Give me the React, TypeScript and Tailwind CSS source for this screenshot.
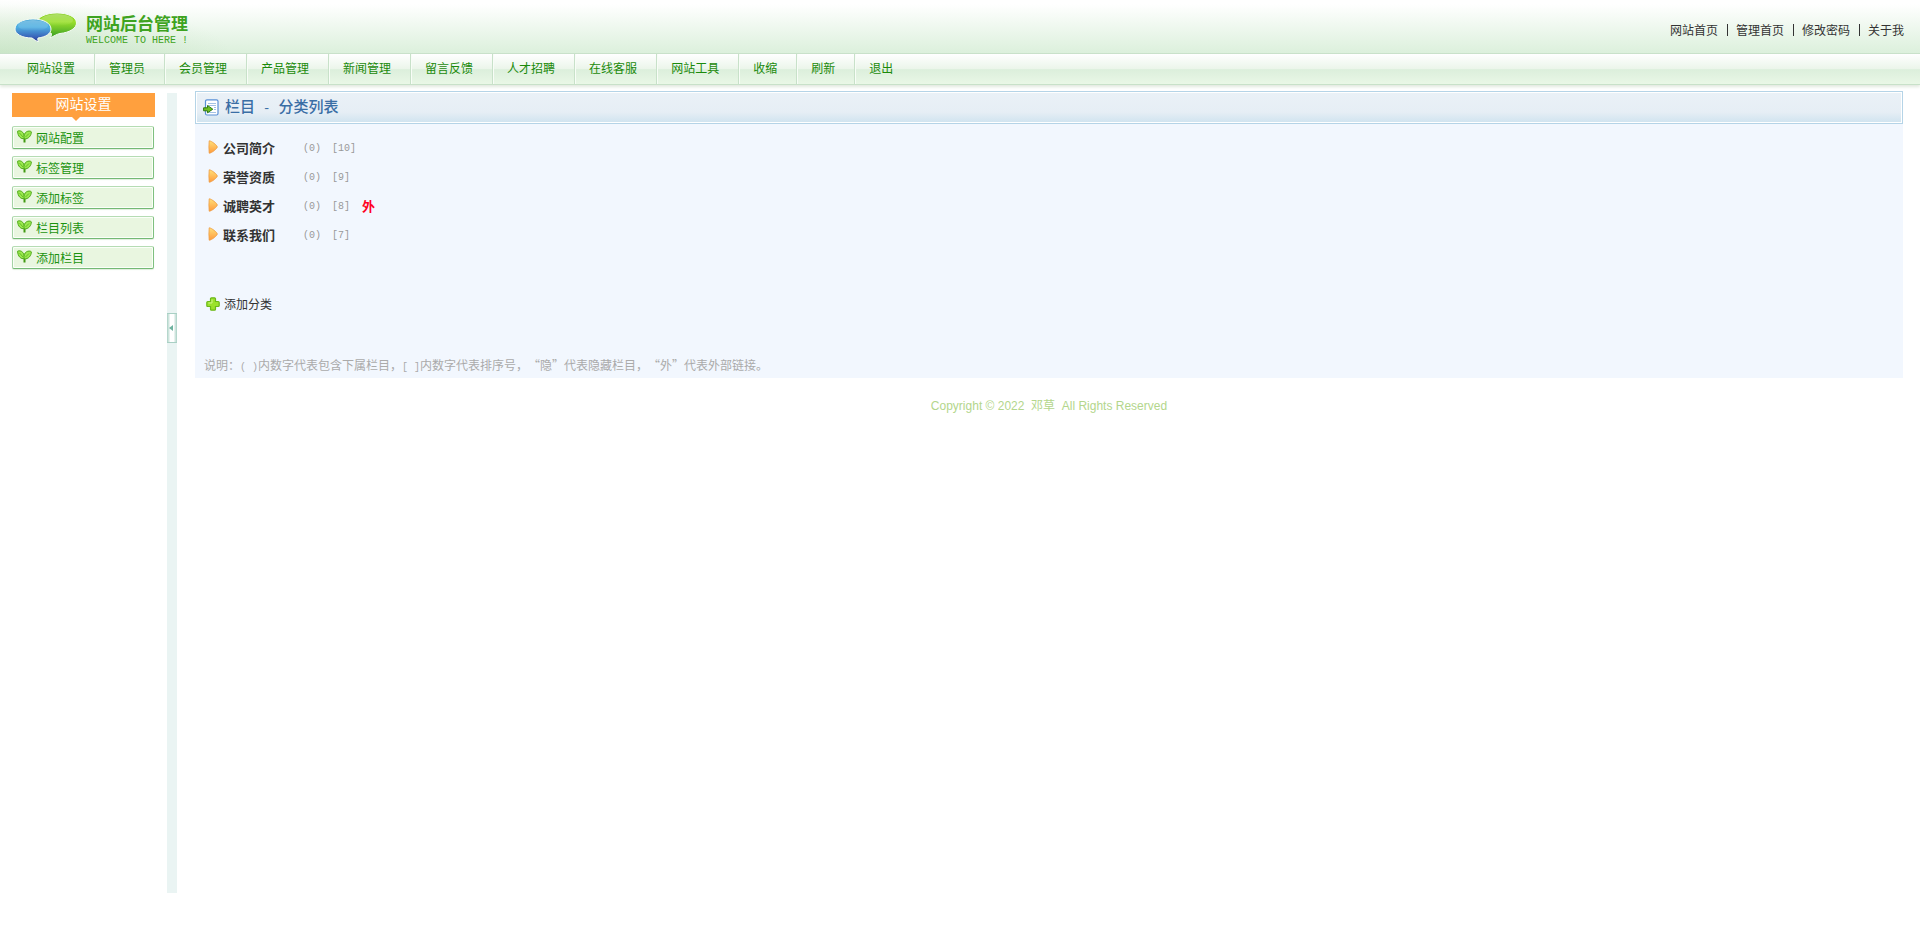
import React from "react";

interface Category {
  name: string;
  children: number;
  sort: number;
  external?: boolean;
}

const TOP_LINKS = ["网站首页", "管理首页", "修改密码", "关于我"];

const NAV_ITEMS = [
  "网站设置",
  "管理员",
  "会员管理",
  "产品管理",
  "新闻管理",
  "留言反馈",
  "人才招聘",
  "在线客服",
  "网站工具",
  "收缩",
  "刷新",
  "退出",
];

const SIDE_ITEMS = ["网站配置", "标签管理", "添加标签", "栏目列表", "添加栏目"];

const CATEGORIES: Category[] = [
  { name: "公司简介", children: 0, sort: 10 },
  { name: "荣誉资质", children: 0, sort: 9 },
  { name: "诚聘英才", children: 0, sort: 8, external: true },
  { name: "联系我们", children: 0, sort: 7 },
];

function Mono({ children }: { children: React.ReactNode }) {
  return <span className="whitespace-pre font-['Liberation_Mono',monospace] text-[10px]">{children}</span>;
}

function LogoIcon() {
  return (
    <svg width="64" height="30" viewBox="0 0 64 30" className="shrink-0" aria-hidden="true">
      <defs>
        <linearGradient id="logoGreen" x1="0" y1="0" x2="0" y2="1">
          <stop offset="0" stopColor="#7fcb14" />
          <stop offset="0.35" stopColor="#9be02c" />
          <stop offset="0.65" stopColor="#6cc02a" />
          <stop offset="1" stopColor="#2f9a1c" />
        </linearGradient>
        <linearGradient id="logoBlue" x1="0" y1="0" x2="0" y2="1">
          <stop offset="0" stopColor="#2f9ad2" />
          <stop offset="0.35" stopColor="#4fb0e2" />
          <stop offset="0.75" stopColor="#3a68bc" />
          <stop offset="1" stopColor="#27328f" />
        </linearGradient>
        <linearGradient id="logoShine" x1="0" y1="0" x2="0" y2="1">
          <stop offset="0" stopColor="#fff" stopOpacity="0.35" />
          <stop offset="1" stopColor="#fff" stopOpacity="0" />
        </linearGradient>
      </defs>
      <path
        d="M43 1C54 1 62.500 5 62.500 11C62.500 16 56 20.500 46 21.500C43 22 40 24 36 26C37.500 24 38 22.500 37 21C28 20.500 23 16 23 11C23 5 32 1 43 1Z"
        fill="url(#logoGreen)"
        stroke="#f4fbf2"
        strokeWidth="1"
      />
      <ellipse cx="43" cy="8" rx="16" ry="6" fill="url(#logoShine)" />
      <path
        d="M19 7C29 7 37 11 37 17C37 21.500 32 25 24 26C23.500 27.500 24 28.500 24.500 30C22 29 20 27.500 18 26C8 26 1 22 1 17C1 11 9 7 19 7Z"
        fill="url(#logoBlue)"
        stroke="#f4fbf2"
        strokeWidth="1"
      />
      <ellipse cx="19" cy="13.500" rx="15" ry="5.500" fill="url(#logoShine)" />
    </svg>
  );
}

function SproutIcon() {
  return (
    <svg width="15" height="13" viewBox="0 0 15 13" className="shrink-0" aria-hidden="true">
      <path d="M7.500 8V12.500" stroke="#3f9a10" strokeWidth="2" />
      <path d="M7.500 8.500C4 9.500 .8 6.500 .6 1.200C2 .4 4.500 .8 5.800 2.500C7.200 4.200 7.500 6 7.500 8.500Z" fill="#9be850" stroke="#4fa81a" />
      <path d="M7.200 9C6.500 5.500 7.500 3 9.500 1.800C11 .8 13.500 .8 14.300 1.800C14.500 5.500 11.500 9.200 7.200 9Z" fill="#9be850" stroke="#4fa81a" />
      <path d="M2.500 3L6 7M12 3.500L8.500 7" stroke="#63bf22" />
    </svg>
  );
}

function ListIcon() {
  return (
    <svg width="16" height="17" viewBox="0 0 16 17" className="shrink-0" aria-hidden="true">
      <rect x="2.500" y=".8" width="12.500" height="15.200" rx="1.500" fill="#fff" stroke="#5a90d6" strokeWidth="1.200" />
      <path d="M5 4.500H13M5 6.500H13M11 8.500H13M11 10.500H13M5 13.500H13" stroke="#a4c2e4" />
      <path d="M.6 8.800H4.500V6.500L9.800 10.200L4.500 13.800V11.800H.6Z" fill="#6fc022" stroke="#2f7a10" />
    </svg>
  );
}

function ArrowIcon() {
  return (
    <svg width="10" height="14" viewBox="0 0 10 14" className="shrink-0" aria-hidden="true">
      <defs>
        <linearGradient id="arrowOrange" x1="0" y1="0" x2="0" y2="1">
          <stop offset="0" stopColor="#ffe07a" />
          <stop offset="1" stopColor="#ff9a3c" />
        </linearGradient>
      </defs>
      <path
        d="M1.200 .8C3.500 .8 9.300 5.500 9.300 7C9.300 8.500 4 13 1.200 13.200C.8 9 .8 5 1.200 .8Z"
        fill="url(#arrowOrange)"
        stroke="#ee9a40"
        strokeWidth="0.800"
      />
    </svg>
  );
}

function PlusIcon() {
  return (
    <svg width="14" height="14" viewBox="0 0 14 14" className="shrink-0" aria-hidden="true">
      <path
        d="M5.500 .8H8.500Q9.500 .8 9.500 1.800V4.500H12.200Q13.200 4.500 13.200 5.500V8.500Q13.200 9.500 12.200 9.500H9.500V12.200Q9.500 13.200 8.500 13.200H5.500Q4.500 13.200 4.500 12.200V9.500H1.800Q.8 9.500 .8 8.500V5.500Q.8 4.500 1.800 4.500H4.500V1.800Q4.500 .8 5.500 .8Z"
        fill="#9be22c"
        stroke="#6cb81a"
        strokeWidth="1.200"
      />
      <path d="M6 2.500V6H2.500" fill="none" stroke="#cdf58a" />
    </svg>
  );
}

function Header() {
  return (
    <header className="flex h-[54px] items-center justify-between border-b border-[#c8e1c9] bg-[radial-gradient(ellipse_230px_54px_at_0_100%,rgba(150,200,140,0.25),rgba(150,200,140,0.16)_50%,transparent),linear-gradient(to_bottom,#fff_8%,#dcf0dc)] bg-no-repeat pr-4 pl-[14px]">
      <div className="flex items-center gap-2">
        <LogoIcon />
        <div className="pt-[6px]">
          <div className="text-[17px] leading-5 font-bold text-[#3ea320]">网站后台管理</div>
          <div className="pt-[2px] font-['Liberation_Mono',monospace] text-[10px] leading-3 text-[#3ea320]">WELCOME TO HERE !</div>
        </div>
      </div>
      <div className="flex items-center pt-[6px] text-[#333]">
        {TOP_LINKS.map((link, i) => (
          <React.Fragment key={link}>
            {i > 0 && <span className="mr-2 ml-[9px] h-3 w-px bg-[#333]" />}
            <a href="#" className="hover:underline">{link}</a>
          </React.Fragment>
        ))}
      </div>
    </header>
  );
}

function NavBar() {
  return (
    <nav className="flex h-[31px] border-b border-[#c8e1c9] bg-[linear-gradient(to_bottom,#fff,#ebf5ea_50%,#dcefdc_52%,#e9f7e6)] pl-3 shadow-[0_2px_3px_#e2e9df]">
      {NAV_ITEMS.map((item, i) => (
        <a
          key={item}
          href="#"
          className={`flex items-center pb-[2px] text-[#1b8a0b] hover:underline ${
            i > 0
              ? "border-l border-[#c8e1c9] pr-[19px] pl-[14px] shadow-[inset_1px_0_#f8fdf7]"
              : "pr-[19px] pl-[15px]"
          }`}
        >
          {item}
        </a>
      ))}
    </nav>
  );
}

function Sidebar() {
  return (
    <aside className="mt-2 ml-3 w-[143px] shrink-0">
      <h2 className="h-6 bg-[#ffa03e] text-center text-[14px] leading-[21px] text-white">网站设置</h2>
      <svg width="8" height="4" viewBox="0 0 8 4" className="ml-[60px]" aria-hidden="true">
        <path d="M0 0H8L4 4Z" fill="#ffa03e" />
      </svg>
      <ul className="mt-[5px] flex flex-col gap-[7px]">
        {SIDE_ITEMS.map((item) => (
          <li key={item}>
            <a
              href="#"
              className="mr-px flex h-[23px] items-center gap-1 rounded-[2px] border border-t-[#b5dcb3] border-r-[#7fc07f] border-b-[#74b974] border-l-[#a5d3a5] bg-[#e9f6e0] pl-1 text-[#1b930f] shadow-[inset_0_0_0_1px_#fafff8,0_1px_1px_#dfeedd]"
            >
              <span className="pb-[2px]">
                <SproutIcon />
              </span>
              {item}
            </a>
          </li>
        ))}
      </ul>
    </aside>
  );
}

function CategoryRow({ category }: { category: Category }) {
  return (
    <li className="flex h-[29px] items-center">
      <span className="pb-[2px]">
        <ArrowIcon />
      </span>
      <a href="#" className="ml-[5px] w-20 text-[13px] font-bold text-[#333]">{category.name}</a>
      <span className="w-[29px] text-[#999]">
        <Mono>({category.children})</Mono>
      </span>
      <span className="text-[#999]">
        <Mono>[{category.sort}]</Mono>
      </span>
      {category.external && <b className="ml-3 text-[13px] text-[#ff0022]">外</b>}
    </li>
  );
}

export default function App() {
  return (
    <div className="min-h-screen bg-white font-['Noto_Sans_CJK_SC',sans-serif] text-[12px] leading-4">
      <Header />
      <NavBar />

      <div className="flex items-start">
        <Sidebar />

        {/* Sidebar toggle */}
        <div className="mt-2 ml-3 min-h-[800px] w-[10px] shrink-0 bg-[#eaf4f3] pt-[220px]">
          <button
            type="button"
            aria-label="收缩"
            className="flex h-[30px] w-full items-center justify-center border-y border-[#a9d0c4] bg-[linear-gradient(to_right,#a9d0c4,#fff_35%,#fff_65%,#a9d0c4)] pr-[2px]"
          >
            <svg width="4" height="6" viewBox="0 0 4 6" aria-hidden="true">
              <path d="M4 0V6L0 3Z" fill="#6fb3a0" />
            </svg>
          </button>
        </div>

        <div className="mt-[6px] mr-[17px] ml-[18px] flex-1">
          <main className="bg-[#f2f7fe] pb-[2px]">
            <h1 className="flex h-[33px] items-center gap-[6px] border border-[#b5d4e7] bg-[linear-gradient(to_bottom,#eaf1f7,#e6eef5_65%,#cfe3ef)] pl-[7px] text-[15px] font-medium text-[#3a6ea5] shadow-[inset_0_0_0_1px_#fff]">
              <ListIcon />
              <span>
                栏目
                <span className="whitespace-pre font-['Liberation_Mono',monospace] text-[13px]"> - </span>
                分类列表
              </span>
            </h1>

            <ul className="mt-[9px] pl-[13px]">
              {CATEGORIES.map((category) => (
                <CategoryRow key={category.name} category={category} />
              ))}
            </ul>

            <div className="mt-[47px] flex pl-[11px]">
              <a href="#" className="flex items-center gap-1 text-[#333]">
                <PlusIcon />
                添加分类
              </a>
            </div>

            <p className="mt-[45px] pl-[9px] text-[#aaa] [text-spacing-trim:space-all]">
              {"说明\uff1a"}
              <Mono>( )</Mono>
              {"内数字代表包含下属栏目\uff0c"}
              <Mono>[ ]</Mono>
              {"内数字代表排序号\uff0c“隐”代表隐藏栏目\uff0c“外”代表外部链接。"}
            </p>
          </main>

          <footer className="pt-5 text-center font-['Liberation_Sans','Noto_Sans_CJK_SC',sans-serif] text-[#b3d68c]">
            Copyright © 2022 &nbsp;邓草&nbsp; All Rights Reserved
          </footer>
        </div>
      </div>
    </div>
  );
}
